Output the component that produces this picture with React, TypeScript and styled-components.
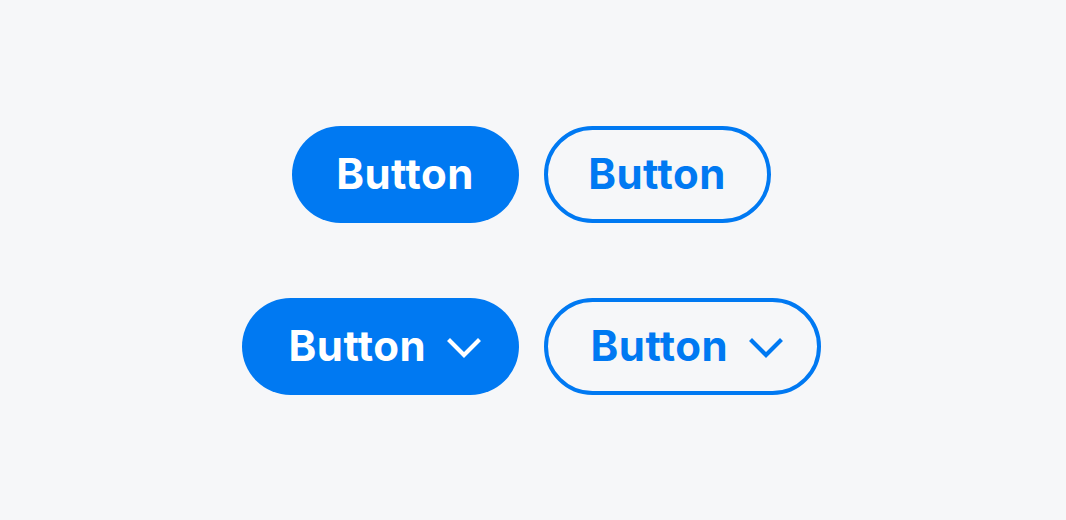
import React from "react";
import styled, { createGlobalStyle, css } from "styled-components";

const Global = createGlobalStyle`
  html, body { margin: 0; padding: 0; background: #f6f7f9; }
  body { font-family: Inter, "Noto Sans", sans-serif; }
`;

const BLUE = "#0079f2";

const Page = styled.div`
  width: 1066px;
  height: 520px;
  display: flex;
  flex-direction: column;
  align-items: center;
  justify-content: center;
  gap: 75px;
  padding-right: 4px;
  box-sizing: border-box;
`;

const Row = styled.div`
  display: flex;
  gap: 25px;
  align-items: center;
`;

type Variant = "solid" | "outline";

const Btn = styled.button<{ $variant: Variant; $chevron?: boolean }>`
  box-sizing: border-box;
  height: 97px;
  width: ${(p) => (p.$chevron ? "277px" : "227px")};
  border-radius: 48.5px;
  display: flex;
  align-items: center;
  justify-content: ${(p) => (p.$chevron ? "flex-start" : "center")};
  gap: 21px;
  font-family: Inter, "Noto Sans", sans-serif;
  font-weight: 700;
  font-size: 42px;
  letter-spacing: 0.5px;
  cursor: pointer;
  padding: 0;
  ${(p) =>
    p.$variant === "solid"
      ? css`
          background: ${BLUE};
          color: #fff;
          border: none;
          padding-left: ${p.$chevron ? "47px" : "0"};
        `
      : css`
          background: transparent;
          color: ${BLUE};
          border: 4px solid ${BLUE};
          padding-left: ${p.$chevron ? "43px" : "0"};
        `}
`;

const Label = styled.span`
  line-height: 1;
  display: block;
  margin-top: 0px;
`;

const ChevronSvg = styled.svg`
  display: block;
  margin-top: 4px;
  flex: none;
`;

const Chevron = () => (
  <ChevronSvg width="34" height="22" viewBox="0 0 34 22" fill="none">
    <polyline
      points="3,4 17,18 31,4"
      stroke="currentColor"
      strokeWidth="4.2"
      strokeLinecap="square"
      strokeLinejoin="miter"
    />
  </ChevronSvg>
);

export default function App() {
  return (
    <>
      <Global />
      <Page>
        <Row>
          <Btn $variant="solid">
            <Label>Button</Label>
          </Btn>
          <Btn $variant="outline">
            <Label>Button</Label>
          </Btn>
        </Row>
        <Row>
          <Btn $variant="solid" $chevron>
            <Label>Button</Label>
            <Chevron />
          </Btn>
          <Btn $variant="outline" $chevron>
            <Label>Button</Label>
            <Chevron />
          </Btn>
        </Row>
      </Page>
    </>
  );
}
